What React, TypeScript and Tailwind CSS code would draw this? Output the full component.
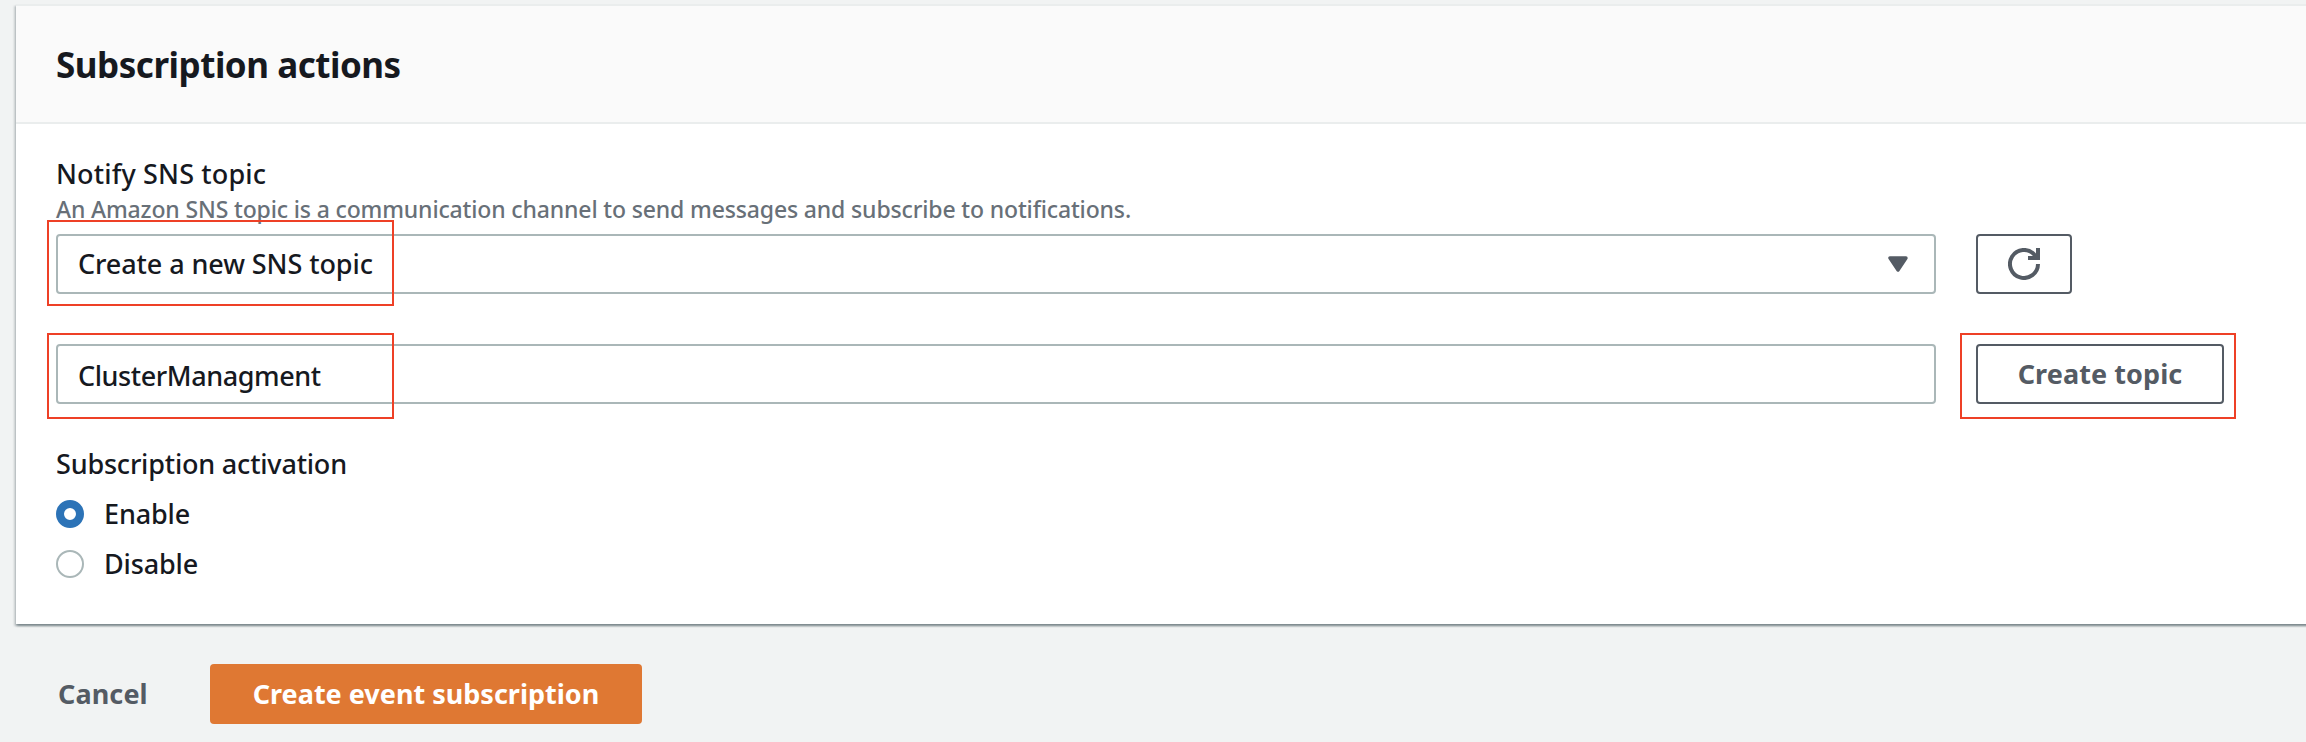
import type { ReactNode } from 'react';

function Highlight({ className }: { className: string }) {
  return <div className={`pointer-events-none absolute border-2 border-[#ee4026] ${className}`} />;
}

function Radio({ checked, children }: { checked?: boolean; children: ReactNode }) {
  return (
    <label className="flex h-[50px] items-center">
      {checked ? (
        <span className="size-7 rounded-full border-8 border-[#2c73b7] bg-white" />
      ) : (
        <span className="size-7 rounded-full border-2 border-[#aab7b8] bg-white" />
      )}
      <span className="ml-5 tracking-[-0.15px]">{children}</span>
    </label>
  );
}

export default function App() {
  return (
    <div className="flex h-[742px] w-full flex-col overflow-hidden bg-[#f1f3f3] pt-1 pl-4 text-[27px] leading-10 font-medium whitespace-nowrap text-[#16191f] [font-family:'Noto_Sans','Open_Sans',sans-serif]">
      <section className="-mr-1 h-[620px] border-t-2 border-[#eaeded] bg-white shadow-[0_2px_2px_0_rgba(0,28,36,0.3),2px_2px_2px_0_rgba(0,28,36,0.15),-2px_2px_2px_0_rgba(0,28,36,0.15)]">
        <header className="flex h-[118px] items-center border-b-2 border-[#eaeded] bg-[#fafafa] pl-10">
          <h2 className="relative top-px text-[35px] font-bold tracking-[-0.48px]">Subscription actions</h2>
        </header>
        <div className="flex flex-col pt-7 pl-10">
          <div className="h-[43px] leading-[44px] tracking-[0.15px]">Notify SNS topic</div>
          <div className="h-7 text-[23px] leading-7 tracking-[-0.145px] text-[#687078]">
            An Amazon SNS topic is a communication channel to send messages and subscribe to notifications.
          </div>
          <div className="relative mt-[11px] flex gap-10">
            <div className="flex h-[60px] w-[1880px] items-center justify-between rounded-[4px] border-2 border-[#aab7b8] bg-white pr-[26px] pl-5">
              <span className="tracking-[-0.09px]">Create a new SNS topic</span>
              <svg className="h-4 w-5" viewBox="0 0 20 16">
                <path d="M2 2h16l-8 12z" fill="#545b64" stroke="#545b64" strokeWidth="3.4" strokeLinejoin="round" />
              </svg>
            </div>
            <button className="flex h-[60px] w-24 items-center justify-center rounded-[4px] border-2 border-[#545b64] bg-white">
              <svg className="size-8" viewBox="0 0 32 32" fill="none" stroke="#545b64" strokeWidth="4">
                <path d="M30 16a14 14 0 1 1-3.6-9.4L30 10" />
                <path d="M30 0v10H20" />
              </svg>
            </button>
            <Highlight className="-top-[14px] -left-[9px] h-[86px] w-[347px]" />
          </div>
          <div className="relative mt-[50px] flex gap-10">
            <div className="flex h-[60px] w-[1880px] items-center rounded-[4px] border-2 border-[#aab7b8] bg-white pl-5">
              <span className="relative top-0.5 tracking-[-0.42px]">ClusterManagment</span>
            </div>
            <button className="flex h-[60px] w-[248px] items-center justify-center rounded-[4px] border-2 border-[#545b64] bg-white font-bold tracking-[0.08px] text-[#545b64]">
              Create topic
            </button>
            <Highlight className="-top-[11px] -left-[9px] h-[86px] w-[347px]" />
            <Highlight className="-top-[11px] left-[1904px] h-[86px] w-[276px]" />
          </div>
          <div className="mt-10 mb-[5px] h-10 tracking-[-0.2px]">Subscription activation</div>
          <Radio checked>Enable</Radio>
          <Radio>Disable</Radio>
        </div>
      </section>
      <footer className="mt-10 flex h-[60px] items-center font-bold">
        <button className="w-[194px] pl-[42px] text-left tracking-[0.1px] text-[#545b64]">Cancel</button>
        <button className="flex h-[60px] w-[432px] items-center justify-center rounded-[4px] bg-[#df7833] text-white">
          Create event subscription
        </button>
      </footer>
    </div>
  );
}
